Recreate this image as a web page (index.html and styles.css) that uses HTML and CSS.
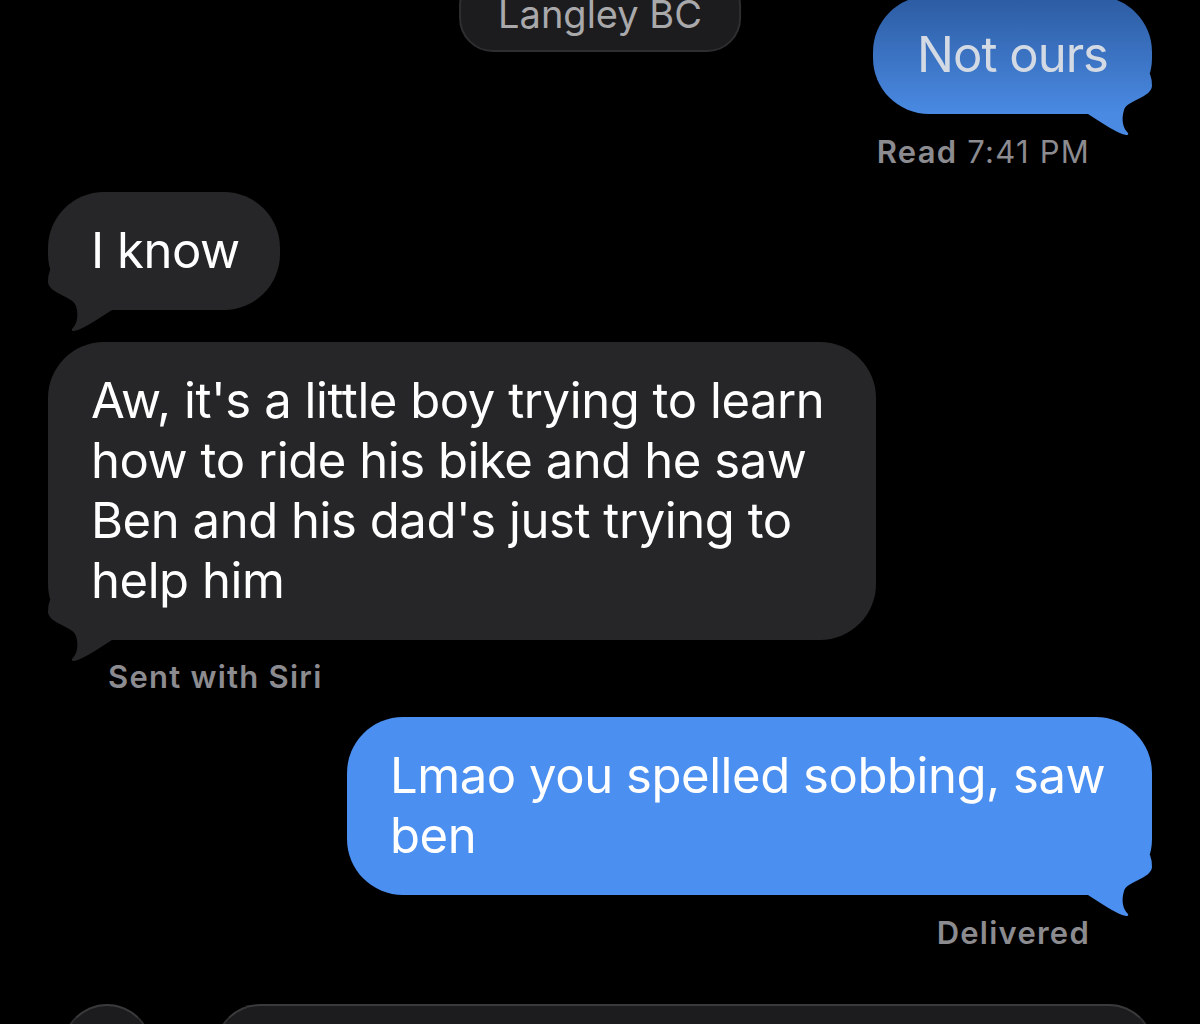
FILE: index.html
```html
<!DOCTYPE html>
<html lang="en">
<head>
    <meta charset="UTF-8">
    <meta name="viewport" content="width=device-width, initial-scale=1.0">
    <title>Messages</title>
    <link rel="stylesheet" href="styles.css">
</head>
<body>
    <div class="thread">
        <div class="location-pill">Langley BC</div>

        <div class="row out first">
            <div class="bubble sent dimmed">
                Not ours
                <svg class="tail" viewBox="0 0 80 62" width="80" height="62">
                    <defs>
                        <linearGradient id="dimFade" gradientUnits="userSpaceOnUse" x1="0" y1="-78" x2="0" y2="40">
                            <stop offset="0" stop-color="#2c5ba1"/>
                            <stop offset="1" stop-color="#4a8ae3"/>
                        </linearGradient>
                    </defs>
                    <path fill="url(#dimFade)" d="M0,0 L78,0 Q80,5 80,12 C79,24 55,26 52,36 C49,46 51,54 56,59 Q57,61 54,61 C44,59 32,50 16,40 L0,40 Z"/>
                </svg>
            </div>
        </div>
        <div class="status right"><strong>Read</strong> 7:41 PM</div>

        <div class="row in">
            <div class="bubble received">
                I know
                <svg class="tail" viewBox="0 0 80 62" width="80" height="62"><path d="M0,0 L78,0 Q80,5 80,12 C79,24 55,26 52,36 C49,46 51,54 56,59 Q57,61 54,61 C44,59 32,50 16,40 L0,40 Z"/></svg>
            </div>
        </div>

        <div class="row in gap">
            <div class="bubble received wide">
                Aw, it's a little boy trying to learn how to ride his bike and he saw Ben and his dad's just trying to help him
                <svg class="tail" viewBox="0 0 80 62" width="80" height="62"><path d="M0,0 L78,0 Q80,5 80,12 C79,24 55,26 52,36 C49,46 51,54 56,59 Q57,61 54,61 C44,59 32,50 16,40 L0,40 Z"/></svg>
            </div>
        </div>
        <div class="status left bold">Sent with Siri</div>

        <div class="row out">
            <div class="bubble sent wide-out">
                Lmao you spelled sobbing, saw ben
                <svg class="tail" viewBox="0 0 80 62" width="80" height="62"><path d="M0,0 L78,0 Q80,5 80,12 C79,24 55,26 52,36 C49,46 51,54 56,59 Q57,61 54,61 C44,59 32,50 16,40 L0,40 Z"/></svg>
            </div>
        </div>
        <div class="status right bold">Delivered</div>

        <div class="compose">
            <div class="apps-button"></div>
            <div class="input-field"></div>
        </div>
    </div>
</body>
</html>
```

FILE: styles.css
```css
:root {
    --bg: #000000;
    --received: #262628;
    --sent: #4b8ff0;
    --sent-top: #2c5ba1;
    --sent-bottom: #4a8ae3;
    --meta: #8b8b90;
    --chrome: #1c1c1e;
    --chrome-border: #2e2e30;
}

html, body {
    height: 100%;
    overflow: hidden;
}

body {
    margin: 0;
    background-color: var(--bg);
    font-family: 'Inter', 'Noto Sans', sans-serif;
    color: #fff;
}

.thread {
    position: relative;
    display: flex;
    flex-direction: column;
    padding: 0 48px;
}

/* floating location chip at the top */
.location-pill {
    position: absolute;
    top: -28px;
    left: 50%;
    transform: translateX(-50%);
    height: 80px;
    line-height: 80px;
    padding: 0 37px;
    box-sizing: border-box;
    background-color: var(--chrome);
    border: 2px solid var(--chrome-border);
    border-radius: 34px;
    color: #a9a9ac;
    font-size: 38px;
    white-space: nowrap;
    z-index: 2;
}

.row {
    display: flex;
}
.row.out {
    justify-content: flex-end;
    margin-top: 22px;
}
.row.in {
    justify-content: flex-start;
    margin-top: 22px;
}
.row.in.gap {
    margin-top: 32px;
}
.row.first {
    margin-top: -4px;
}

.bubble {
    position: relative;
    box-sizing: border-box;
    padding: 29px 40px 29px 43px;
    border-radius: 56px;
    font-size: 49px;
    line-height: 60px;
    letter-spacing: -0.009em;
}
.bubble .tail {
    position: absolute;
    bottom: -22px;
}
.bubble.sent .tail {
    right: 0;
    fill: var(--sent);
}
.bubble.received .tail {
    left: 0;
    transform: scaleX(-1);
    fill: var(--received);
}

.bubble.sent {
    background-color: var(--sent);
}
.bubble.sent.dimmed {
    background: linear-gradient(to bottom, var(--sent-top), var(--sent-bottom));
    color: #d3dae4;
    padding-left: 44px;
    padding-right: 44px;
    letter-spacing: -0.02em;
}
.bubble.received {
    background-color: var(--received);
}
.bubble.wide {
    max-width: 828px;
}
.bubble.wide-out {
    max-width: 805px;
    padding-right: 36px;
}

.status {
    margin-top: 20px;
    font-size: 31px;
    line-height: 36px;
    letter-spacing: 0.04em;
    color: var(--meta);
    font-weight: 400;
}
.status strong,
.status.bold {
    font-weight: 600;
}
.status.right {
    align-self: flex-end;
    margin-right: 62px;
}
.status.left {
    margin-left: 60px;
    margin-top: 19px;
}

.compose {
    display: flex;
    align-items: flex-start;
    gap: 63px;
    margin-top: 53px;
    margin-left: 14px;
    margin-right: -2px;
}
.apps-button {
    width: 90px;
    height: 90px;
    flex-shrink: 0;
    border-radius: 50%;
    background-color: var(--chrome);
    border: 2px solid var(--chrome-border);
    border-top-color: #3a3a3c;
    box-sizing: border-box;
}
.input-field {
    flex: 1;
    height: 90px;
    border-radius: 45px;
    background-color: var(--chrome);
    border: 2px solid var(--chrome-border);
    border-top-color: #3a3a3c;
    box-sizing: border-box;
}
```
